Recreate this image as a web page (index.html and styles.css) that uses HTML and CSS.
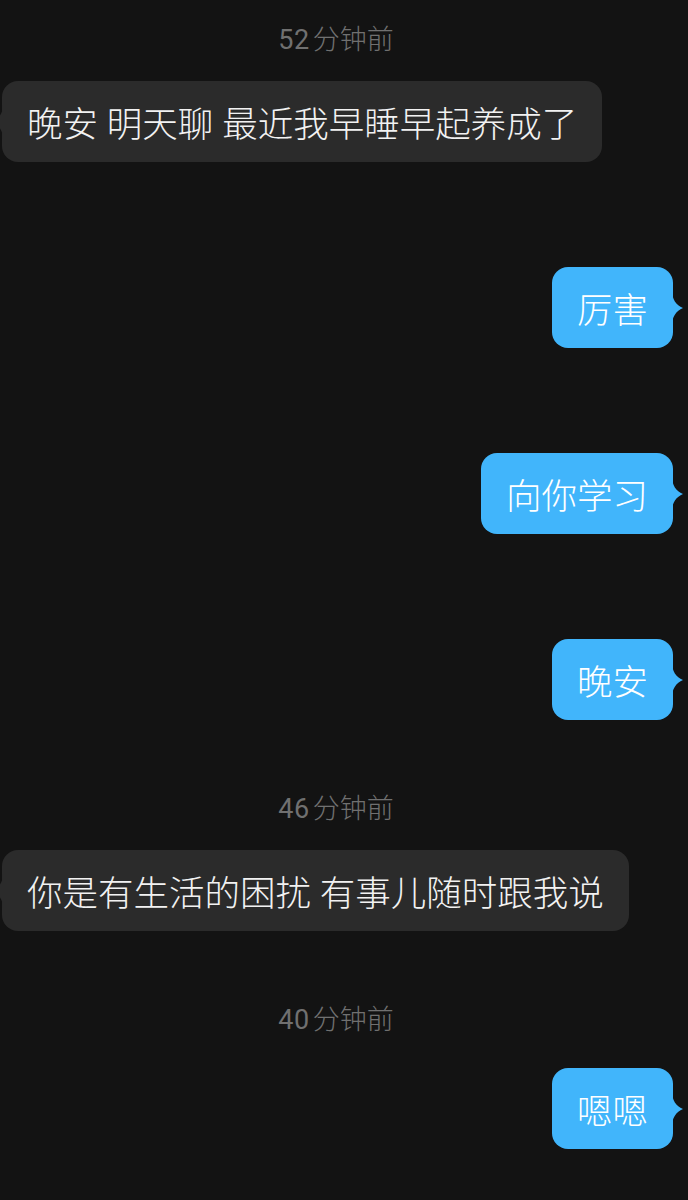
FILE: index.html
```html
<!DOCTYPE html>
<html lang="zh-CN">
<head>
<meta charset="utf-8">
<title>聊天</title>
<link rel="stylesheet" href="styles.css">
</head>
<body>
<main class="chat">
  <div class="ts ts-first"><span class="num">52</span>分钟前</div>
  <div class="msg in">晚安 明天聊 最近我早睡早起养成了<svg class="tail" viewBox="0 0 11 34"><path d="M11 0 C11 8 7 14 0 17 C7 20 11 26 11 34 Z"/></svg></div>
  <div class="msg out gap">厉害<svg class="tail" viewBox="0 0 11 34"><path d="M0 0 C0 8 4 14 11 17 C4 20 0 26 0 34 Z"/></svg></div>
  <div class="msg out gap">向你学习<svg class="tail" viewBox="0 0 11 34"><path d="M0 0 C0 8 4 14 11 17 C4 20 0 26 0 34 Z"/></svg></div>
  <div class="msg out gap">晚安<svg class="tail" viewBox="0 0 11 34"><path d="M0 0 C0 8 4 14 11 17 C4 20 0 26 0 34 Z"/></svg></div>
  <div class="ts"><span class="num">46</span>分钟前</div>
  <div class="msg in">你是有生活的困扰 有事儿随时跟我说<svg class="tail" viewBox="0 0 11 34"><path d="M11 0 C11 8 7 14 0 17 C7 20 11 26 11 34 Z"/></svg></div>
  <div class="ts ts-wide"><span class="num">40</span>分钟前</div>
  <div class="msg out">嗯嗯<svg class="tail" viewBox="0 0 11 34"><path d="M0 0 C0 8 4 14 11 17 C4 20 0 26 0 34 Z"/></svg></div>
</main>
</body>
</html>
```

FILE: styles.css
```css
html, body {
  margin: 0;
  padding: 0;
  background: #131313;
}

body {
  width: 688px;
  height: 1200px;
  overflow: hidden;
  font-family: "Noto Sans CJK SC", "Noto Sans", sans-serif;
}

.chat {
  display: flex;
  flex-direction: column;
  padding-top: 18px;
}

.ts {
  align-self: center;
  height: 40px;
  line-height: 40px;
  font-size: 27px;
  font-weight: 300;
  color: #707070;
  margin: 67px 16px 23px 0;
}

.num {
  font-family: "Roboto", "Noto Sans", sans-serif;
  font-weight: 400;
  margin-right: 3px;
  letter-spacing: 0.5px;
}

.ts-first {
  margin-top: 0;
  margin-bottom: 23px;
}

.ts-wide {
  margin-bottom: 30px;
}

.msg {
  position: relative;
  box-sizing: border-box;
  height: 81px;
  line-height: 81px;
  padding: 0 25px;
  border-radius: 16px;
  font-size: 35.5px;
  font-weight: 300;
  white-space: nowrap;
  word-spacing: 1px;
}

.msg.gap {
  margin-top: 105px;
}

.in {
  align-self: flex-start;
  margin-left: 2px;
  background: #2b2b2b;
  color: #f2f2f2;
}

.out {
  align-self: flex-end;
  margin-right: 15px;
  background: #41b5fb;
  color: #ffffff;
}

.tail {
  position: absolute;
  top: 50%;
  width: 11px;
  height: 34px;
  margin-top: -17px;
}

.out .tail {
  right: -10px;
  fill: #41b5fb;
}

.in .tail {
  left: -10px;
  fill: #2b2b2b;
}
```
